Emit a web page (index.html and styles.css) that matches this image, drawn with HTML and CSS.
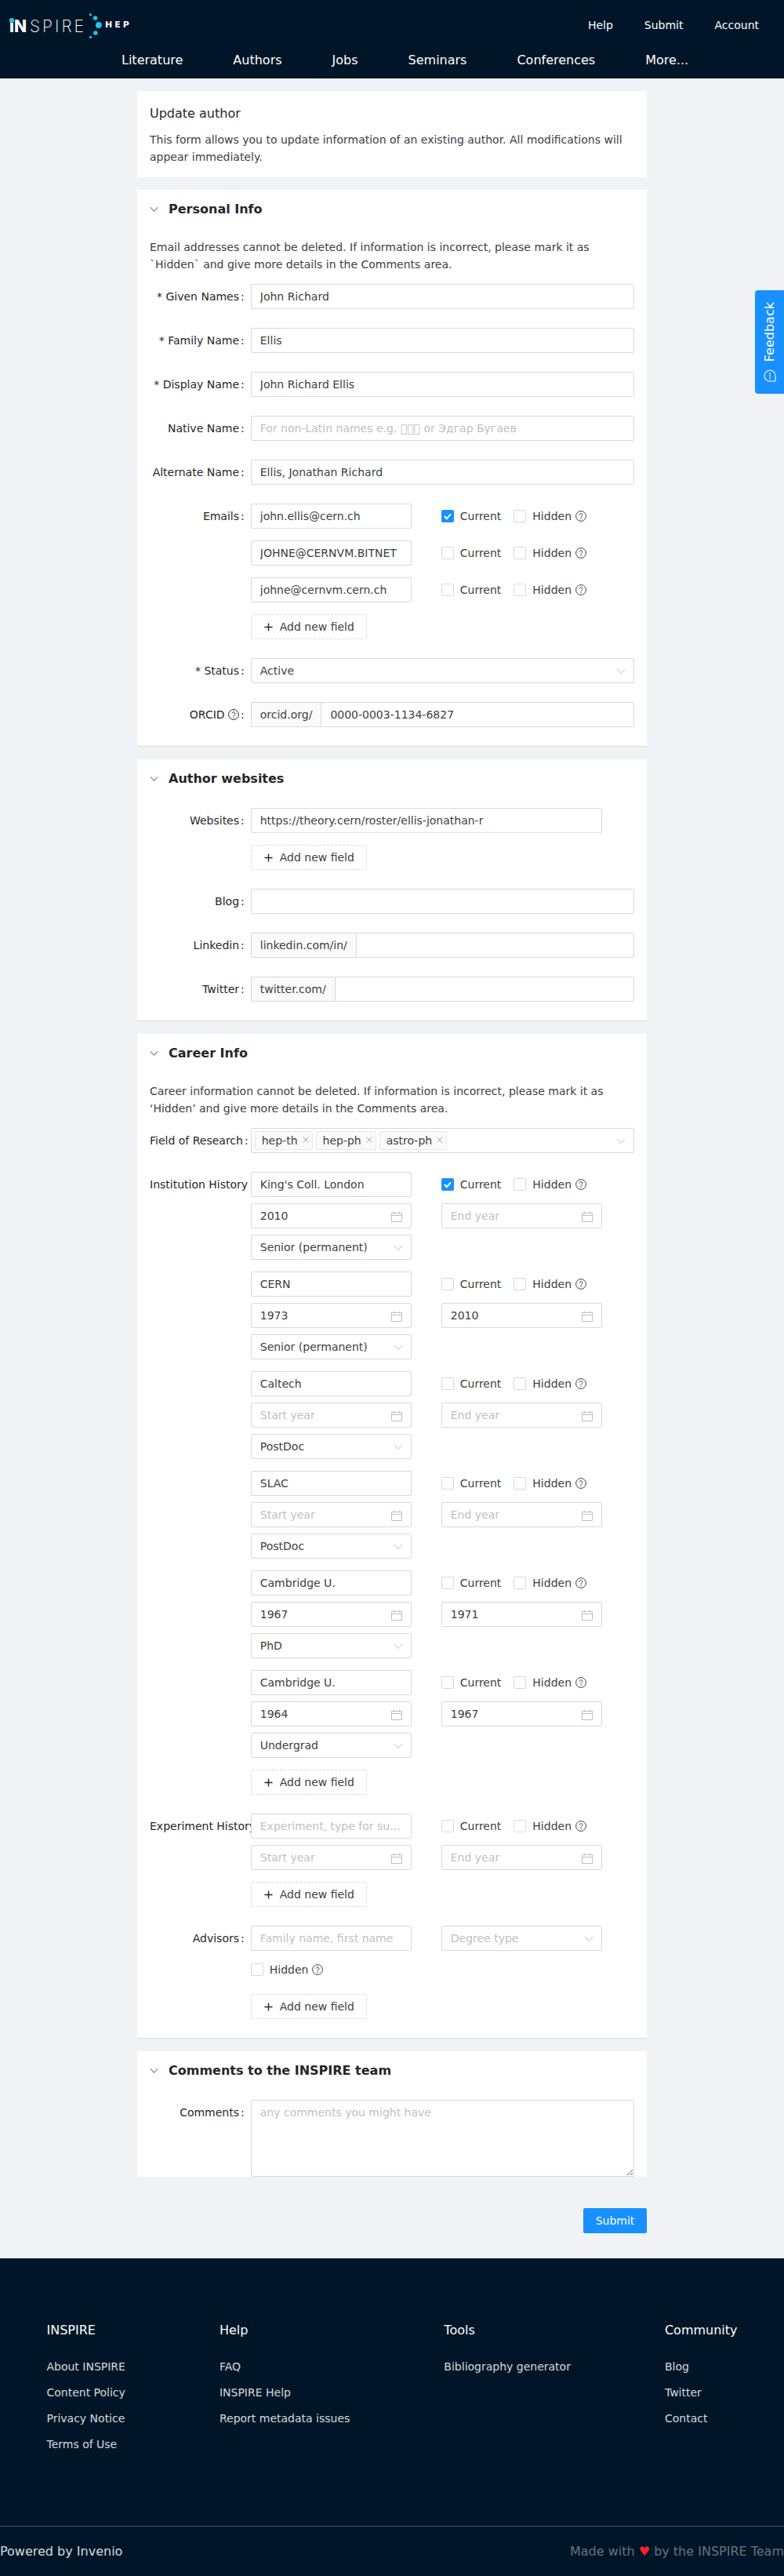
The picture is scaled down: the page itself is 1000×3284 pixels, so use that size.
FILE: index.html
```html
<!DOCTYPE html>
<html lang="en">
<head>
<meta charset="utf-8">
<title>Update author - INSPIRE</title>
<link rel="stylesheet" href="styles.css">
</head>
<body>
<svg class="sprite" width="0" height="0" aria-hidden="true">
  <symbol id="i-help" viewBox="0 0 14 14"><circle cx="7" cy="7" r="6.4" fill="none" stroke="currentColor" stroke-width="1"/><path d="M5.1 5.6a1.9 1.9 0 1 1 2.9 1.6c-.6.4-1 .7-1 1.5" fill="none" stroke="currentColor" stroke-width="1"/><circle cx="7" cy="10.3" r=".7" fill="currentColor"/></symbol>
  <symbol id="i-down" viewBox="0 0 12 8"><path d="M1 1l5 5.6L11 1" fill="none" stroke="currentColor" stroke-width="1"/></symbol>
  <symbol id="i-cal" viewBox="0 0 14 14"><path d="M.5 2.5h13v11H.5zM.5 5.5h13M3.500 .5v3M10.500 .5v3" fill="none" stroke="currentColor" stroke-width="1"/></symbol>
  <symbol id="i-plus" viewBox="0 0 12 12"><path d="M6 .5v11M.5 6h11" fill="none" stroke="currentColor" stroke-width="1.500"/></symbol>
  <symbol id="i-x" viewBox="0 0 8 8"><path d="M.5 .5l7 7M7.500 .5l-7 7" fill="none" stroke="currentColor" stroke-width="1"/></symbol>
  <symbol id="i-tick" viewBox="0 0 16 16"><path d="M3.800 8l3 3.200 5.200-5.800" fill="none" stroke="#fff" stroke-width="2"/></symbol>
</svg>

<header class="site-header">
  <div class="topbar">
    <a class="logo" href="#">
      <span class="logo-word"><b class="logo-in">iN</b><span class="logo-spire">SPIRE</span><i class="logo-idot"></i></span>
      <svg class="logo-dots" width="20" height="34" viewBox="0 0 20 34"><g fill="#22c3f3"><circle cx="2.500" cy="3.700" r="1.600"/><circle cx="8.500" cy="8" r="2.700"/><circle cx="12.800" cy="17" r="3.900"/><circle cx="8.800" cy="27" r="2.700"/><circle cx="2.500" cy="32.300" r="1.600"/></g></svg>
      <span class="logo-hep">HEP</span>
    </a>
    <nav class="topnav"><a href="#">Help</a><a href="#">Submit</a><a href="#">Account</a></nav>
  </div>
  <nav class="mainnav"><a href="#">Literature</a><a href="#">Authors</a><a href="#">Jobs</a><a href="#">Seminars</a><a href="#">Conferences</a><a href="#">More...</a></nav>
</header>

<aside class="feedback">
  <span class="feedback-text">Feedback</span>
  <svg class="feedback-icon" width="16" height="16" viewBox="0 0 16 16"><path d="M8 1a7 7 0 1 0 0 14h6.500a.5.5 0 0 0 .5-.5V8a7 7 0 0 0-7-7z" fill="none" stroke="#fff" stroke-width="1.100"/><g fill="#fff"><circle cx="8" cy="5" r=".9"/><circle cx="8" cy="8" r=".9"/><circle cx="8" cy="11" r=".9"/></g></svg>
</aside>

<main class="page">
  <section class="card intro">
    <h1 class="intro-title">Update author</h1>
    <p class="text">This form allows you to update information of an existing author. All modifications will appear immediately.</p>
  </section>

  <section class="card card-ruled">
    <h2 class="section-title"><svg class="chev"><use href="#i-down"/></svg>Personal Info</h2>
    <div class="section-body">
      <p class="text note">Email addresses cannot be deleted. If information is incorrect, please mark it as `Hidden` and give more details in the Comments area.</p>
      <div class="row"><label class="label">* Given Names<span class="colon">:</span></label><input class="input" value="John Richard"></div>
      <div class="row"><label class="label">* Family Name<span class="colon">:</span></label><input class="input" value="Ellis"></div>
      <div class="row"><label class="label">* Display Name<span class="colon">:</span></label><input class="input" value="John Richard Ellis"></div>
      <div class="row"><label class="label">Native Name<span class="colon">:</span></label><input class="input" placeholder="For non-Latin names e.g. &#x10FFFD;&#x10FFFD;&#x10FFFD; or Эдгар Бугаев"></div>
      <div class="row"><label class="label">Alternate Name<span class="colon">:</span></label><input class="input" value="Ellis, Jonathan Richard"></div>
      <div class="row">
        <label class="label">Emails<span class="colon">:</span></label>
        <div class="stack">
          <div class="pair"><input class="input" value="john.ellis@cern.ch"><div class="checks"><span class="check"><i class="box box-on"><svg class="tick"><use href="#i-tick"/></svg></i>Current</span><span class="check"><i class="box"></i>Hidden<svg class="help"><use href="#i-help"/></svg></span></div></div>
          <div class="pair"><input class="input" value="JOHNE@CERNVM.BITNET"><div class="checks"><span class="check"><i class="box"></i>Current</span><span class="check"><i class="box"></i>Hidden<svg class="help"><use href="#i-help"/></svg></span></div></div>
          <div class="pair"><input class="input" value="johne@cernvm.cern.ch"><div class="checks"><span class="check"><i class="box"></i>Current</span><span class="check"><i class="box"></i>Hidden<svg class="help"><use href="#i-help"/></svg></span></div></div>
          <button class="add" type="button"><svg class="plus"><use href="#i-plus"/></svg>Add new field</button>
        </div>
      </div>
      <div class="row"><label class="label">* Status<span class="colon">:</span></label><div class="select">Active<svg class="arrow"><use href="#i-down"/></svg></div></div>
      <div class="row"><label class="label">ORCID <svg class="help help-label"><use href="#i-help"/></svg><span class="colon">:</span></label><div class="group"><span class="addon">orcid.org/</span><input class="input group-input" value="0000-0003-1134-6827"></div></div>
    </div>
  </section>

  <section class="card card-ruled">
    <h2 class="section-title"><svg class="chev"><use href="#i-down"/></svg>Author websites</h2>
    <div class="section-body">
      <div class="row">
        <label class="label">Websites<span class="colon">:</span></label>
        <div class="stack"><input class="input wide" value="https://theory.cern/roster/ellis-jonathan-r"><button class="add" type="button"><svg class="plus"><use href="#i-plus"/></svg>Add new field</button></div>
      </div>
      <div class="row"><label class="label">Blog<span class="colon">:</span></label><input class="input"></div>
      <div class="row"><label class="label">Linkedin<span class="colon">:</span></label><div class="group"><span class="addon">linkedin.com/in/</span><input class="input group-input"></div></div>
      <div class="row"><label class="label">Twitter<span class="colon">:</span></label><div class="group"><span class="addon">twitter.com/</span><input class="input group-input"></div></div>
    </div>
  </section>

  <section class="card card-ruled">
    <h2 class="section-title"><svg class="chev"><use href="#i-down"/></svg>Career Info</h2>
    <div class="section-body">
      <p class="text note">Career information cannot be deleted. If information is incorrect, please mark it as ‘Hidden’ and give more details in the Comments area.</p>
      <div class="row">
        <label class="label">Field of Research<span class="colon">:</span></label>
        <div class="select select-tags"><span class="tag">hep-th<svg class="tag-x"><use href="#i-x"/></svg></span><span class="tag">hep-ph<svg class="tag-x"><use href="#i-x"/></svg></span><span class="tag">astro-ph<svg class="tag-x"><use href="#i-x"/></svg></span><svg class="arrow"><use href="#i-down"/></svg></div>
      </div>
      <div class="row">
        <label class="label">Institution History<span class="colon">:</span></label>
        <div class="stack">
          <div class="career">
            <input class="input" value="King's Coll. London"><div class="checks"><span class="check"><i class="box box-on"><svg class="tick"><use href="#i-tick"/></svg></i>Current</span><span class="check"><i class="box"></i>Hidden<svg class="help"><use href="#i-help"/></svg></span></div>
            <div class="date">2010<svg class="cal"><use href="#i-cal"/></svg></div><div class="date empty">End year<svg class="cal"><use href="#i-cal"/></svg></div>
            <div class="select">Senior (permanent)<svg class="arrow"><use href="#i-down"/></svg></div>
          </div>
          <div class="career">
            <input class="input" value="CERN"><div class="checks"><span class="check"><i class="box"></i>Current</span><span class="check"><i class="box"></i>Hidden<svg class="help"><use href="#i-help"/></svg></span></div>
            <div class="date">1973<svg class="cal"><use href="#i-cal"/></svg></div><div class="date">2010<svg class="cal"><use href="#i-cal"/></svg></div>
            <div class="select">Senior (permanent)<svg class="arrow"><use href="#i-down"/></svg></div>
          </div>
          <div class="career">
            <input class="input" value="Caltech"><div class="checks"><span class="check"><i class="box"></i>Current</span><span class="check"><i class="box"></i>Hidden<svg class="help"><use href="#i-help"/></svg></span></div>
            <div class="date empty">Start year<svg class="cal"><use href="#i-cal"/></svg></div><div class="date empty">End year<svg class="cal"><use href="#i-cal"/></svg></div>
            <div class="select">PostDoc<svg class="arrow"><use href="#i-down"/></svg></div>
          </div>
          <div class="career">
            <input class="input" value="SLAC"><div class="checks"><span class="check"><i class="box"></i>Current</span><span class="check"><i class="box"></i>Hidden<svg class="help"><use href="#i-help"/></svg></span></div>
            <div class="date empty">Start year<svg class="cal"><use href="#i-cal"/></svg></div><div class="date empty">End year<svg class="cal"><use href="#i-cal"/></svg></div>
            <div class="select">PostDoc<svg class="arrow"><use href="#i-down"/></svg></div>
          </div>
          <div class="career">
            <input class="input" value="Cambridge U."><div class="checks"><span class="check"><i class="box"></i>Current</span><span class="check"><i class="box"></i>Hidden<svg class="help"><use href="#i-help"/></svg></span></div>
            <div class="date">1967<svg class="cal"><use href="#i-cal"/></svg></div><div class="date">1971<svg class="cal"><use href="#i-cal"/></svg></div>
            <div class="select">PhD<svg class="arrow"><use href="#i-down"/></svg></div>
          </div>
          <div class="career">
            <input class="input" value="Cambridge U."><div class="checks"><span class="check"><i class="box"></i>Current</span><span class="check"><i class="box"></i>Hidden<svg class="help"><use href="#i-help"/></svg></span></div>
            <div class="date">1964<svg class="cal"><use href="#i-cal"/></svg></div><div class="date">1967<svg class="cal"><use href="#i-cal"/></svg></div>
            <div class="select">Undergrad<svg class="arrow"><use href="#i-down"/></svg></div>
          </div>
          <button class="add" type="button"><svg class="plus"><use href="#i-plus"/></svg>Add new field</button>
        </div>
      </div>
      <div class="row">
        <label class="label">Experiment History<span class="colon">:</span></label>
        <div class="stack">
          <div class="career">
            <input class="input" placeholder="Experiment, type for suggestions"><div class="checks"><span class="check"><i class="box"></i>Current</span><span class="check"><i class="box"></i>Hidden<svg class="help"><use href="#i-help"/></svg></span></div>
            <div class="date empty">Start year<svg class="cal"><use href="#i-cal"/></svg></div><div class="date empty">End year<svg class="cal"><use href="#i-cal"/></svg></div>
          </div>
          <button class="add" type="button"><svg class="plus"><use href="#i-plus"/></svg>Add new field</button>
        </div>
      </div>
      <div class="row">
        <label class="label">Advisors<span class="colon">:</span></label>
        <div class="stack">
          <div class="career">
            <input class="input" placeholder="Family name, first name"><div class="select empty">Degree type<svg class="arrow"><use href="#i-down"/></svg></div>
            <div class="checks checks-left"><span class="check"><i class="box"></i>Hidden<svg class="help"><use href="#i-help"/></svg></span></div>
          </div>
          <button class="add" type="button"><svg class="plus"><use href="#i-plus"/></svg>Add new field</button>
        </div>
      </div>
    </div>
  </section>

  <section class="card">
    <h2 class="section-title"><svg class="chev"><use href="#i-down"/></svg>Comments to the INSPIRE team</h2>
    <div class="section-body">
      <div class="row"><label class="label">Comments<span class="colon">:</span></label><textarea class="textarea" placeholder="any comments you might have"></textarea></div>
    </div>
  </section>

  <div class="actions"><button class="submit" type="button">Submit</button></div>
</main>

<footer class="site-footer">
  <div class="footer-cols">
    <div class="footer-col"><h3>INSPIRE</h3><a href="#">About INSPIRE</a><a href="#">Content Policy</a><a href="#">Privacy Notice</a><a href="#">Terms of Use</a></div>
    <div class="footer-col"><h3>Help</h3><a href="#">FAQ</a><a href="#">INSPIRE Help</a><a href="#">Report metadata issues</a></div>
    <div class="footer-col"><h3>Tools</h3><a href="#">Bibliography generator</a></div>
    <div class="footer-col"><h3>Community</h3><a href="#">Blog</a><a href="#">Twitter</a><a href="#">Contact</a></div>
  </div>
  <div class="footer-bottom"><span>Powered by Invenio</span><span class="made">Made with <span class="heart">♥</span> by the INSPIRE Team</span></div>
</footer>
</body>
</html>
```
FILE: styles.css
```css
* { box-sizing: border-box; }
html, body { margin: 0; padding: 0; }
body {
  position: relative;
  background: #f0f2f5;
  color: #404040;
  font: 14px/22px "DejaVu Sans", sans-serif;
}
a { color: inherit; text-decoration: none; }
.sprite { position: absolute; }

/* header */
.site-header { height: 100px; background: #001628; color: #fff; }
.topbar { display: flex; justify-content: space-between; align-items: center; height: 64px; padding: 0 32px 0 12px; }
.logo { display: flex; align-items: center; color: #fff; }
.logo-word { position: relative; width: 101px; margin-top: 4px; font: 300 21px/24px Inter, sans-serif; white-space: nowrap; }
.logo-in { font-weight: 800; }
.logo-spire { margin-left: 4px; font-weight: 200; letter-spacing: 3px; }
.logo-idot { position: absolute; left: 0; top: 1px; width: 5.5px; height: 5.5px; border-radius: 50%; background: #22c3f3; }
.logo-hep { margin-left: 1px; font: bold 11px/14px "DejaVu Sans", sans-serif; letter-spacing: 3px; }
.topnav { display: flex; gap: 40px; }
.mainnav { display: flex; gap: 64px; height: 26px; padding-left: 155px; font-size: 16px; line-height: 26px; }

/* feedback */
.feedback {
  position: absolute; top: 370px; right: 0;
  display: flex; flex-direction: column; align-items: center; justify-content: center; gap: 9px;
  width: 37px; height: 132px;
  border-radius: 4px 0 0 4px;
  background: #1890ff; color: #fff; font-size: 16px;
}
.feedback-text { writing-mode: vertical-rl; transform: rotate(180deg); line-height: 20px; }

/* layout */
.page { width: 650px; margin: 0 auto; padding: 16px 0 32px; }
.card { margin-bottom: 16px; padding: 0 16px; background: #fff; }
.card-ruled { border-bottom: 1px solid #d9d9d9; }
.card:last-of-type { margin-bottom: 0; }
.intro { height: 110px; padding-top: 17px; }
.intro-title { margin: 0 0 10px; color: #262626; font-size: 16px; font-weight: 400; line-height: 24px; }
.text { margin: 0; }
.note { margin-bottom: 14px; }
.section-title {
  display: flex; align-items: center;
  height: 37px; margin: 0; padding-top: 13px;
  color: #262626; font-size: 16px; font-weight: 700; line-height: 24px;
}
.chev { width: 11px; height: 8px; margin-right: 13px; color: #333; }
.section-body { padding-top: 25px; }
.row { display: grid; grid-template-columns: 128.75px 1fr; margin-bottom: 24px; }
.label {
  display: block; overflow: hidden;
  height: 32px;
  color: #262626; line-height: 32px; text-align: right; white-space: nowrap;
}
.colon { margin: 0 8px 0 2px; }
.help-label { vertical-align: -2px; }

/* controls */
.input, .select, .date, .textarea {
  display: block; width: 100%; height: 32px;
  padding: 4px 11px;
  border: 1px solid #d9d9d9; border-radius: 2px;
  background: #fff; color: #404040;
  font: 14px/22px "DejaVu Sans", sans-serif;
  outline: none;
}
.input::placeholder, .textarea::placeholder { color: #bfbfbf; opacity: 1; }
.input { text-overflow: ellipsis; }
.wide { width: 448px; }
.select, .date { position: relative; white-space: nowrap; }
.select.empty, .date.empty { color: #bfbfbf; }
.arrow { position: absolute; top: 12px; right: 10px; width: 12px; height: 8px; color: #bfbfbf; }
.cal { position: absolute; top: 9px; right: 11px; width: 14px; height: 14px; color: #bfbfbf; }
.textarea { height: 98px; resize: vertical; }
.group { display: flex; height: 32px; }
.addon {
  flex: none; padding: 4px 11px;
  border: 1px solid #d9d9d9; border-right: 0; border-radius: 2px 0 0 2px;
  background: #fafafa; white-space: nowrap;
}
.group-input { flex: 1; border-radius: 0 2px 2px 0; }

.select-tags { display: flex; align-items: center; gap: 4px; padding: 3px 4px; }
.tag {
  display: flex; align-items: center; gap: 6px;
  height: 24px; padding: 0 4px 0 8px;
  border: 1px solid #e8e8e8; border-radius: 2px;
  background: #fafafa; line-height: 22px;
}
.tag-x { width: 8px; height: 8px; margin-top: -2px; color: #a6a6a6; }

.stack { display: grid; row-gap: 15px; justify-items: start; }
.pair, .career { display: grid; grid-template-columns: 205px 205px; column-gap: 38px; }
.career { width: 448px; row-gap: 8px; }
.checks { display: flex; align-items: center; gap: 16px; height: 32px; }
.check { display: flex; align-items: center; white-space: nowrap; }
.box {
  display: block; flex: none;
  width: 16px; height: 16px; margin-right: 8px;
  border: 1px solid #d9d9d9; border-radius: 2px; background: #fff;
}
.box-on { border-color: #1890ff; background: #1890ff; }
.tick { display: block; width: 16px; height: 16px; margin: -1px; }
.help { flex: none; width: 14px; height: 14px; margin-left: 5px; color: #404040; }
.help-label { margin-left: 0; color: #262626; }
.add {
  display: flex; align-items: center;
  width: 148.5px; height: 32px; padding: 0 15px;
  border: 1px dashed #d9d9d9; border-radius: 2px;
  background: #fff; color: #404040;
  font: 14px/22px "DejaVu Sans", sans-serif; white-space: nowrap;
}
.plus { flex: none; width: 11px; height: 11px; margin: 0 9px 0 1px; color: #262626; }

.actions { display: flex; justify-content: flex-end; padding-top: 16px; }
.submit {
  width: 81px; height: 32px;
  border: 1px solid #1890ff; border-radius: 2px;
  background: #1890ff; color: #fff;
  font: 14px/22px "DejaVu Sans", sans-serif;
}

/* footer */
.site-footer { height: 405px; padding-top: 79px; background: #001628; color: rgba(255, 255, 255, .85); }
.footer-cols { display: flex; justify-content: center; gap: 120px; height: 262px; }
.footer-col { display: flex; flex-direction: column; align-items: flex-start; gap: 11px; }
.footer-col h3 { margin: 0 0 12px; padding-top: 1px; color: #fff; font-size: 16px; font-weight: 400; line-height: 24px; }
.footer-bottom {
  display: flex; justify-content: space-between; align-items: center;
  height: 64px;
  border-top: 1px solid #4a5663;
  font-size: 16px;
}
.made { color: #69737e; }
.heart { color: #f5222d; }
```
